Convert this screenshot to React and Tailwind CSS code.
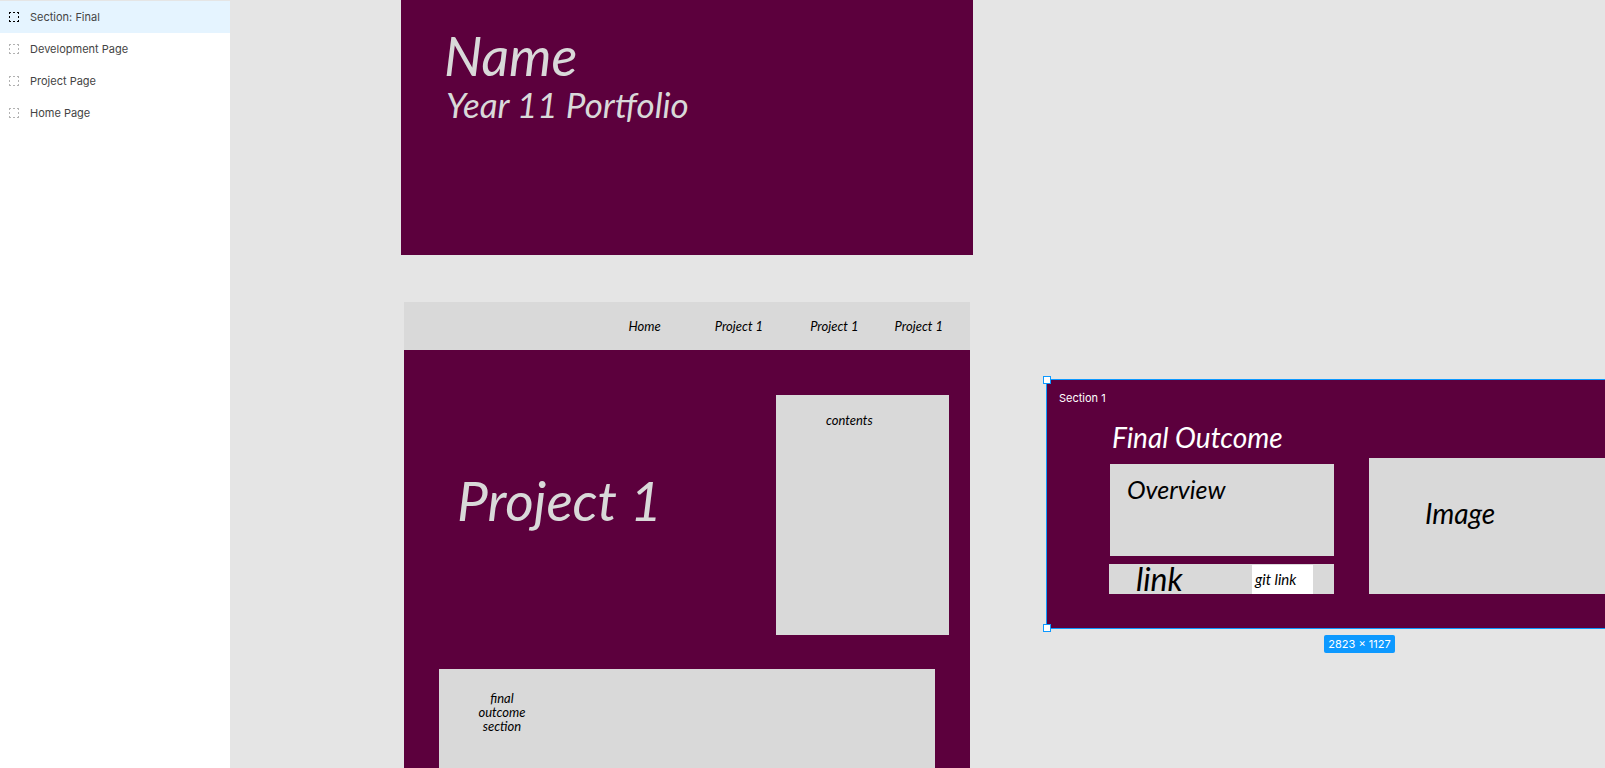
import React from "react";

const layers = [
  { name: "Section: Final", selected: true },
  { name: "Development Page" },
  { name: "Project Page" },
  { name: "Home Page" },
];

function FrameIcon({ selected }) {
  return (
    <svg
      viewBox="0 0 10 10"
      className={selected ? "size-[10px] text-black" : "size-[10px] text-[#b3b3b3]"}
      fill="none"
      stroke="currentColor"
      shapeRendering="crispEdges"
      aria-hidden="true"
    >
      <path d="M0 .5h2M4 .5h2M8 .5h2M0 9.5h2M4 9.5h2M8 9.5h2M.5 0v2M.5 4v2M.5 8v2M9.5 0v2M9.5 4v2M9.5 8v2" />
    </svg>
  );
}

function LayerPanel() {
  return (
    <aside className="w-[230px] shrink-0 bg-white font-[Inter,sans-serif]">
      <ul className="border-t border-[#e5e5e5]">
        {layers.map((layer) => (
          <li key={layer.name}>
            <button
              type="button"
              className={
                "flex h-8 w-full items-center gap-[11px] pl-[9px] text-left text-[11px] text-[#444444] " +
                (layer.selected ? "bg-[#e5f4ff]" : "bg-white")
              }
            >
              <FrameIcon selected={layer.selected} />
              {layer.name}
            </button>
          </li>
        ))}
      </ul>
    </aside>
  );
}

function HomeFrame() {
  return (
    <article className="absolute top-0 left-[171px] h-[255px] w-[572px] bg-[#5c003d] pt-[26px] pl-[43px] text-[#d9d9d9]">
      <h1 className="text-[54px] leading-[60px]">Name</h1>
      <p className="pl-0.5 text-[35px] leading-9">Year 11 Portfolio</p>
    </article>
  );
}

function ProjectFrame() {
  return (
    <article className="absolute top-[302px] bottom-0 left-[174px] w-[566px] overflow-hidden bg-[#5c003d]">
      <nav className="flex h-12 items-center justify-end bg-[#d9d9d9] pt-0.5 pr-[27px] text-[13px] text-black">
        <a href="#home" className="mr-[54px]">Home</a>
        <a href="#project-1" className="mr-[47px]">Project 1</a>
        <a href="#project-2" className="mr-9">Project 1</a>
        <a href="#project-3">Project 1</a>
      </nav>
      <div className="flex justify-between pt-[45px] pr-[21px] pl-[53px]">
        <h2 className="pt-[75px] text-[55px] leading-[60px] text-[#d9d9d9]">Project 1</h2>
        <section className="h-[240px] w-[173px] bg-[#d9d9d9] pt-[17px] pl-[50px] text-[13px] leading-4 text-black">
          contents
        </section>
      </div>
      <section className="mt-[34px] ml-[35px] h-[200px] w-[496px] bg-[#d9d9d9] pt-[22px] pl-[39px] text-black">
        <p className="w-12 text-center text-[13px] leading-[14px]">final outcome section</p>
      </section>
    </article>
  );
}

function OutcomeSection() {
  return (
    <article className="absolute top-[379px] left-[816px] w-[627px] border border-[#0d99ff] bg-[#5c003d] pb-[34px] text-black">
      <span className="absolute -top-1 -left-1 size-2 border border-[#0d99ff] bg-white" />
      <span className="absolute -bottom-1 -left-1 size-2 border border-[#0d99ff] bg-white" />
      <p className="pt-[10px] pl-3 font-[Inter,sans-serif] text-[11px] leading-4 text-white not-italic">
        Section 1
      </p>
      <div className="flex items-end gap-[35px] pt-4 pl-[62px]">
        <div className="w-[225px]">
          <h2 className="pl-[3px] text-[28px] leading-[30px] text-white">Final Outcome</h2>
          <section className="mt-3 ml-px h-[92px] bg-[#d9d9d9] pt-[9px] pl-[17px] text-[25px] leading-8">
            Overview
          </section>
          <div className="mt-2 flex h-[30px] items-end justify-between bg-[#d9d9d9] pr-[21px] pl-[27px]">
            <span className="text-[32px] leading-[30px]">link</span>
            <a
              href="#git"
              className="flex h-[29px] w-[61px] items-center bg-white pl-[3px] text-[15px]"
            >
              git link
            </a>
          </div>
        </div>
        <section className="h-[136px] w-[270px] bg-[#d9d9d9] pt-[39px] pl-14 text-[28px] leading-8">
          Image
        </section>
      </div>
      <div className="absolute inset-x-0 top-full flex justify-center pt-[7px] font-[Inter,sans-serif] not-italic">
        <span className="rounded-xs bg-[#0d99ff] px-1 text-[11px] leading-[18px] text-white">
          2823 × 1127
        </span>
      </div>
    </article>
  );
}

export default function App() {
  return (
    <div className="flex min-h-screen">
      <LayerPanel />
      <main className="relative flex-1 overflow-hidden bg-[#e5e5e5] font-[Lato,sans-serif] italic">
        <HomeFrame />
        <ProjectFrame />
        <OutcomeSection />
      </main>
    </div>
  );
}
